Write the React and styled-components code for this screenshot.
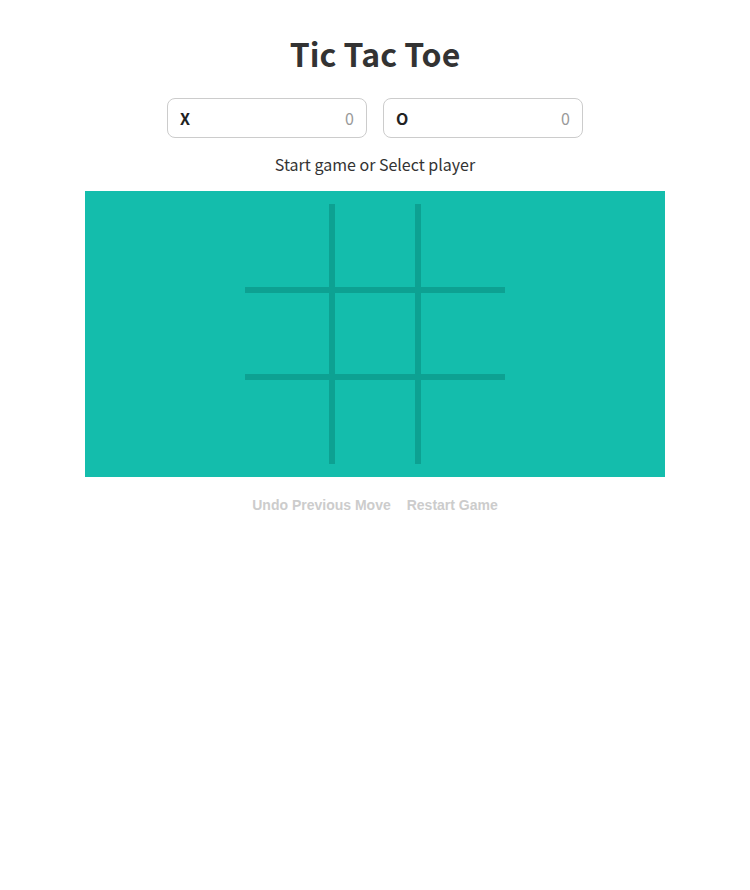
import React, { useState } from "react";
import styled, { createGlobalStyle } from "styled-components";

const Global = createGlobalStyle`
  html, body { margin: 0; padding: 0; background: #fff; }
  body { font-family: "Noto Sans CJK KR", "Noto Sans", sans-serif; color: #333; }
`;

const Page = styled.div`
  display: flex;
  flex-direction: column;
  align-items: center;
  padding-top: 33px;
`;

const Title = styled.h1`
  margin: 0;
  font-size: 32px;
  line-height: 40px;
  font-weight: 700;
  color: #333;
`;

const Scores = styled.div`
  display: flex;
  gap: 16px;
  margin-top: 25px;
`;

const ScoreBox = styled.div`
  box-sizing: border-box;
  width: 200px;
  height: 40px;
  border: 1px solid #ccc;
  border-radius: 8px;
  padding: 0 12px;
  display: flex;
  align-items: center;
  justify-content: space-between;
  font-size: 16px;
`;

const Player = styled.span`
  font-weight: 700;
  color: #222;
`;

const Count = styled.span`
  color: #999;
`;

const Status = styled.p`
  margin: 14px 0 0;
  font-size: 16px;
  line-height: 24px;
  color: #333;
`;

const Board = styled.div`
  margin-top: 15px;
  width: 580px;
  background: #14bdac;
  padding: 13px 0;
  display: flex;
  justify-content: center;
`;

const Grid = styled.div`
  display: grid;
  grid-template-columns: 84px 80px 84px;
  grid-template-rows: 83px 81px 84px;
  gap: 6px;
  background: #0da192;
`;

const Cell = styled.div`
  background: #14bdac;
  cursor: pointer;
`;

const Actions = styled.div`
  display: flex;
  gap: 16px;
  margin-top: 18px;
`;

const ActionButton = styled.button`
  border: none;
  background: none;
  padding: 0;
  font-family: "Liberation Sans", Arial, sans-serif;
  font-weight: 700;
  font-size: 14px;
  line-height: 20px;
  color: #ccc;
  cursor: default;
`;

export default function App() {
  const [cells] = useState(Array(9).fill(null));
  return (
    <>
      <Global />
      <Page>
        <Title>Tic Tac Toe</Title>
        <Scores>
          <ScoreBox>
            <Player>X</Player>
            <Count>0</Count>
          </ScoreBox>
          <ScoreBox>
            <Player>O</Player>
            <Count>0</Count>
          </ScoreBox>
        </Scores>
        <Status>Start game or Select player</Status>
        <Board>
          <Grid>
            {cells.map((c, i) => (
              <Cell key={i}>{c}</Cell>
            ))}
          </Grid>
        </Board>
        <Actions>
          <ActionButton disabled>Undo Previous Move</ActionButton>
          <ActionButton disabled>Restart Game</ActionButton>
        </Actions>
      </Page>
    </>
  );
}
